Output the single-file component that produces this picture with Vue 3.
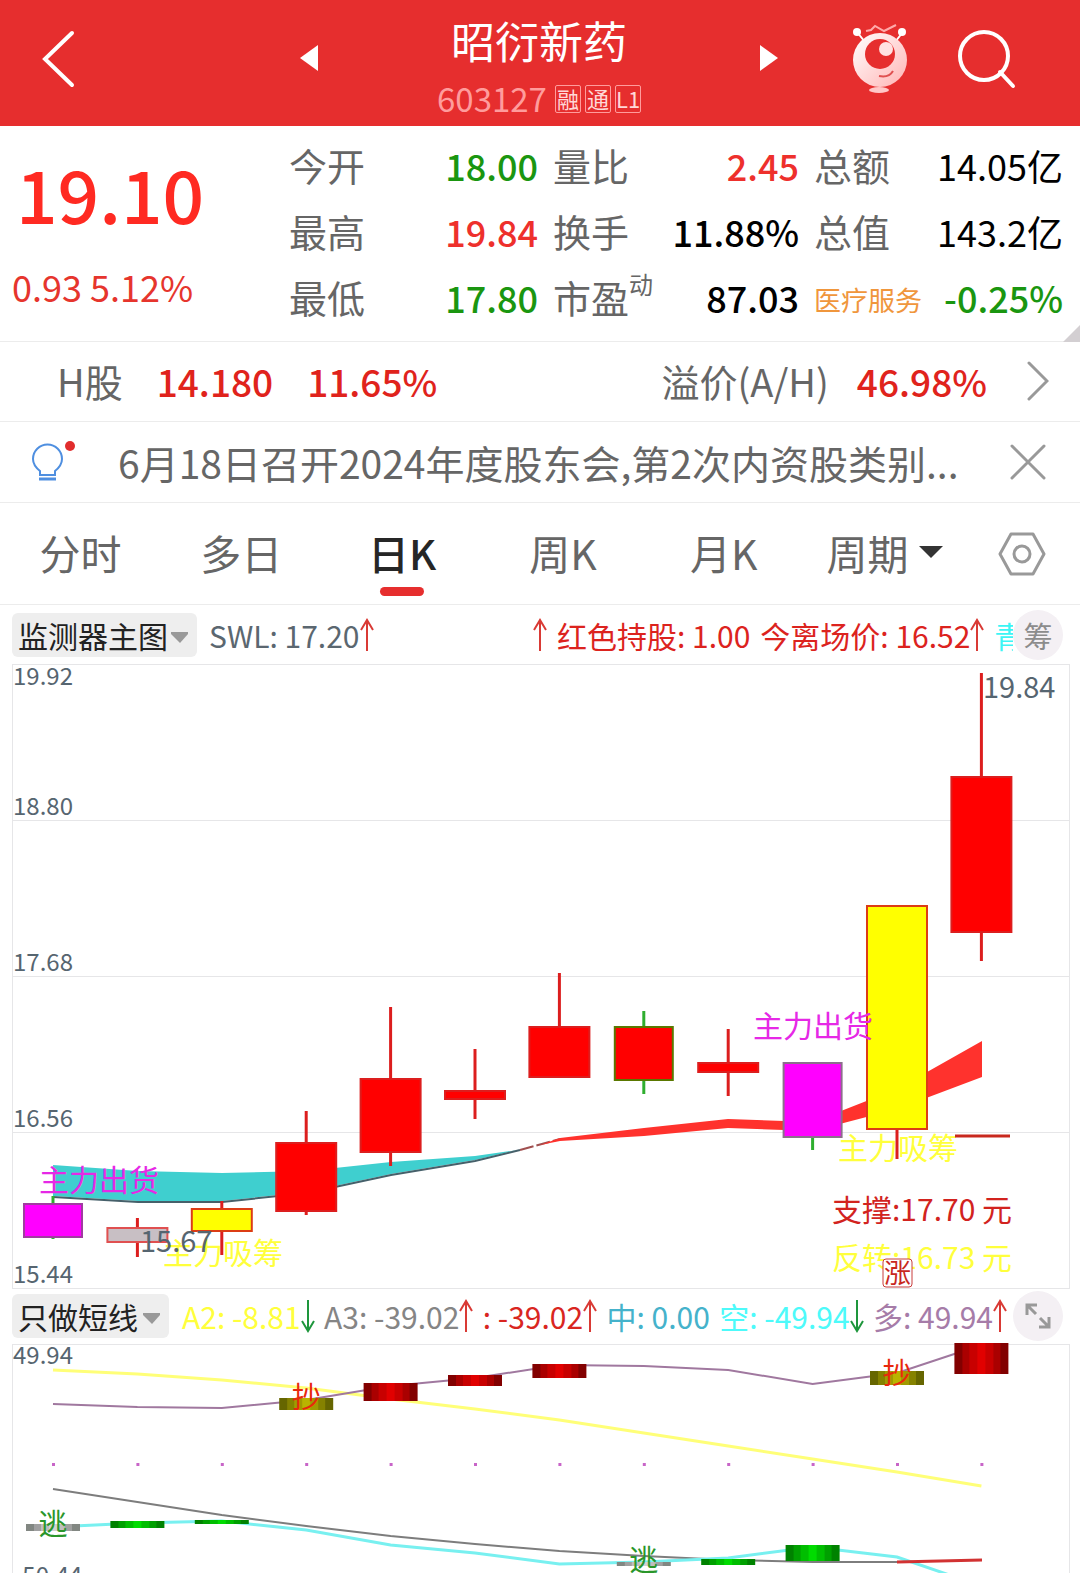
<script setup>
import { ref } from 'vue'

const quoteRows = [
  [
    { label: '今开', value: '18.00', tone: 'down' },
    { label: '量比', value: '2.45', tone: 'up' },
    { label: '总额', value: '14.05亿', tone: 'plain' },
  ],
  [
    { label: '最高', value: '19.84', tone: 'up' },
    { label: '换手', value: '11.88%', tone: 'ink' },
    { label: '总值', value: '143.2亿', tone: 'plain' },
  ],
  [
    { label: '最低', value: '17.80', tone: 'down' },
    { label: '市盈', sup: '动', value: '87.03', tone: 'ink' },
    { label: '医疗服务', sector: true, value: '-0.25%', tone: 'down' },
  ],
]

const tabs = ['分时', '多日', '日K', '周K', '月K', '周期']
const activeTab = ref('日K')
const mainIndicator = ref('监测器主图')
const subIndicator = ref('只做短线')

const subValues = [
  { text: 'A2: -8.81', color: '#ffff3c', dir: 'down' },
  { text: 'A3: -39.02', color: '#858585', dir: 'up' },
  { text: ': -39.02', color: '#d9261f', dir: 'up' },
  { text: '中: 0.00', color: '#45b2cb' },
  { text: '空: -49.94', color: '#4dfafa', dir: 'down' },
  { text: '多: 49.94', color: '#a67ca8', dir: 'up' },
]

const cx = (i) => 53 + i * 84.4

const axisLabels = [
  { text: '19.92', y: 21 },
  { text: '18.80', y: 151 },
  { text: '17.68', y: 307 },
  { text: '16.56', y: 463 },
  { text: '15.44', y: 619 },
]

const RED = '#dc1e1e'
const GREEN = '#2fae2f'
const candles = [
  { top: 540, bottom: 573, high: 532, low: 575, fill: '#ff00ff', edge: '#a03ca0', wick: GREEN, w: 58 },
  { top: 564, bottom: 578, high: 554, low: 593, fill: '#c8bfc4', edge: '#e05050', wick: RED, w: 60 },
  { top: 545, bottom: 567, high: 537, low: 591, fill: '#ffff00', edge: '#dc3c14', wick: RED, w: 60 },
  { top: 479, bottom: 547, high: 447, low: 551, fill: '#ff0000', edge: RED, wick: RED, w: 60 },
  { top: 415, bottom: 488, high: 343, low: 502, fill: '#ff0000', edge: RED, wick: RED, w: 60 },
  { top: 427, bottom: 435, high: 385, low: 455, fill: '#ff0000', edge: RED, wick: RED, w: 60 },
  { top: 363, bottom: 413, high: 309, low: 413, fill: '#ff0000', edge: RED, wick: RED, w: 60 },
  { top: 363, bottom: 416, high: 347, low: 430, fill: '#ff0000', edge: '#5a7800', wick: GREEN, w: 58 },
  { top: 399, bottom: 408, high: 365, low: 432, fill: '#ff0000', edge: RED, wick: RED, w: 60 },
  { top: 399, bottom: 473, high: 399, low: 486, fill: '#ff00ff', edge: '#8c6e8c', wick: GREEN, w: 58 },
  { top: 242, bottom: 465, high: 242, low: 495, fill: '#ffff00', edge: '#dc3c14', wick: RED, w: 60 },
  { top: 113, bottom: 268, high: 9, low: 297, fill: '#ff0000', edge: RED, wick: RED, w: 60 },
]

const palettes = {
  red: ['#820000', '#aa0000', '#c80000', '#e10000'],
  olive: ['#666600', '#858200', '#a09a00', '#b9b400'],
  green: ['#008200', '#00a000', '#00be00', '#00dc00'],
  gray: ['#828782', '#a0a0a0', '#bebebe', '#d2d2d2'],
}
const stripeWidths = [54, 38, 24, 8]
const bars = [
  { i: 0, y: 180, h: 7, kind: 'gray' },
  { i: 1, y: 177, h: 7, kind: 'green' },
  { i: 2, y: 176, h: 4, kind: 'green' },
  { i: 3, y: 54, h: 12, kind: 'olive' },
  { i: 4, y: 39, h: 18, kind: 'red' },
  { i: 5, y: 31, h: 11, kind: 'red' },
  { i: 6, y: 20, h: 14, kind: 'red' },
  { i: 7, y: 218, h: 4, kind: 'gray' },
  { i: 8, y: 215, h: 6, kind: 'green' },
  { i: 9, y: 201, h: 16, kind: 'green' },
  { i: 10, y: 27, h: 14, kind: 'olive' },
  { i: 11, y: -1, h: 31, kind: 'red' },
]

const line = (ys) => ys.map((y, i) => `${cx(i)},${y}`).join(' ')
const shortLine = line([26, 30, 36, 44, 55, 65, 76, 89, 102, 115, 128, 142])
const bullLine = line([60, 63, 64, 56, 42, 34, 21, 22, 26, 40, 29, 1])
const midLine = line([145, 158, 171, 182, 192, 200, 207, 212, 216, 218, 218])
const bearLine = line([183, 179, 177, 186, 201, 209, 220, 218, 214, 203, 213, 242])
</script>

<template>
  <div class="page">
    <header class="topbar">
      <button class="icon-btn back" aria-label="返回">
        <svg width="36" height="60" viewBox="0 0 36 60"><path d="M31 4 L4 30 L31 56" fill="none" stroke="#fff" stroke-width="4" stroke-linecap="round" /></svg>
      </button>
      <div class="switcher">
        <button class="icon-btn" aria-label="上一只">
          <svg width="18" height="28" viewBox="0 0 18 28"><path d="M18 1 V27 L0 14 Z" fill="#fff" /></svg>
        </button>
        <div class="stock">
          <h1>昭衍新药</h1>
          <p class="code"><span>603127</span><b>融</b><b>通</b><b>L1</b></p>
        </div>
        <button class="icon-btn" aria-label="下一只">
          <svg width="18" height="28" viewBox="0 0 18 28"><path d="M0 1 V27 L18 14 Z" fill="#fff" /></svg>
        </button>
      </div>
      <div class="actions">
        <button class="icon-btn" aria-label="智能助手">
          <svg width="60" height="70" viewBox="0 0 60 70">
            <defs>
              <linearGradient id="bot" x1="0" y1="0" x2="1" y2="1">
                <stop offset="0" stop-color="#fff" />
                <stop offset="1" stop-color="#ffb4b4" />
              </linearGradient>
            </defs>
            <path d="M7 8 L15 18 M53 8 L45 18" stroke="#fff" stroke-width="2" />
            <path d="M16 7 L21 6 L25 2 L34 7 L46 1" fill="none" stroke="#ffaaaa" stroke-width="2" />
            <circle cx="7" cy="8" r="4" fill="#fff" />
            <circle cx="52" cy="8" r="4" fill="#fff" />
            <circle cx="30" cy="36" r="27" fill="url(#bot)" />
            <circle cx="30" cy="30" r="15" fill="#e62e2e" />
            <circle cx="36" cy="25" r="7" fill="#ffe1e1" />
            <path d="M29 52 Q39 54 43 47" fill="none" stroke="#e05050" stroke-width="2" />
            <ellipse cx="29" cy="66" rx="10" ry="3" fill="#ffc8c8" />
          </svg>
        </button>
        <button class="icon-btn" aria-label="搜索">
          <svg width="60" height="60" viewBox="0 0 60 60"><g fill="none" stroke="#fff" stroke-width="4" stroke-linecap="round"><circle cx="28" cy="27" r="24" /><path d="M44 43 L57 57" /></g></svg>
        </button>
      </div>
    </header>

    <section class="quote">
      <div class="price">
        <strong>19.10</strong>
        <p>0.93 5.12%</p>
      </div>
      <div class="stats">
        <template v-for="(row, r) in quoteRows" :key="r">
          <dl v-for="cell in row" :key="cell.label">
            <dt :class="{ sector: cell.sector }">{{ cell.label }}<sup v-if="cell.sup">{{ cell.sup }}</sup></dt>
            <dd :class="cell.tone">{{ cell.value }}</dd>
          </dl>
        </template>
      </div>
      <span class="fold"></span>
    </section>

    <a class="hshare" href="#h">
      <span class="name">H股</span>
      <span class="num">14.180</span>
      <span class="num">11.65%</span>
      <span class="name premium">溢价(A/H)</span>
      <span class="num">46.98%</span>
      <svg width="22" height="40" viewBox="0 0 22 40"><path d="M2 2 L20 20 L2 38" fill="none" stroke="#999" stroke-width="3" stroke-linecap="round" /></svg>
    </a>

    <section class="notice">
      <svg width="46" height="44" viewBox="0 0 46 44">
        <g fill="none" stroke="#4f8fe0" stroke-width="2">
          <path d="M9 35 V31 C4 27 2 23 2 19 A14.500 14.500 0 0 1 31 19 C31 23 29 27 24 31 V35 Z" />
          <path d="M8 39 H25" stroke-width="3" />
        </g>
        <circle cx="39" cy="6" r="5" fill="#e12d2d" />
      </svg>
      <a href="#notice">6月18日召开2024年度股东会,第2次内资股类别...</a>
      <button class="icon-btn" aria-label="关闭">
        <svg width="36" height="36" viewBox="0 0 36 36"><path d="M2 2 L34 34 M34 2 L2 34" stroke="#999" stroke-width="3" stroke-linecap="round" /></svg>
      </button>
    </section>

    <nav class="tabs">
      <button v-for="t in tabs" :key="t" class="tab" :class="{ active: t === activeTab }" @click="activeTab = t">
        <span>{{ t }}</span>
        <svg v-if="t === '周期'" width="24" height="12" viewBox="0 0 24 12"><path d="M0 0 H24 L12 12 Z" fill="#333" /></svg>
      </button>
      <button class="icon-btn" aria-label="设置">
        <svg width="48" height="44" viewBox="0 0 48 44"><g fill="none" stroke="#999" stroke-width="3" stroke-linejoin="round"><path d="M13 2 H35 L46 22 L35 42 H13 L2 22 Z" /><circle cx="24" cy="22" r="8" /></g></svg>
      </button>
    </nav>

    <div class="indicator first">
      <label class="picker">
        <select v-model="mainIndicator" class="five" aria-label="主图指标"><option>监测器主图</option></select>
        <svg width="17" height="11" viewBox="0 0 17 11"><path d="M0 0 H17 V2 L9 11 L0 2 Z" fill="#999" /></svg>
      </label>
      <span class="item slate">SWL: 17.20<svg class="arrow" viewBox="0 0 14 34"><path d="M7 33 V2 M1 12 L7 2 L13 12" /></svg></span>
      <div class="right">
        <span class="item red"><svg class="arrow" viewBox="0 0 14 34"><path d="M7 33 V2 M1 12 L7 2 L13 12" /></svg></span>
        <span class="item red">红色持股: 1.00</span>
        <span class="item red">今离场价: 16.52<svg class="arrow" viewBox="0 0 14 34"><path d="M7 33 V2 M1 12 L7 2 L13 12" /></svg></span>
        <span class="item cut">青</span>
      </div>
      <button class="round">筹</button>
    </div>

    <svg class="chart" viewBox="0 0 1080 624">
      <g fill="none" stroke="#e6e6e8" stroke-width="1" shape-rendering="crispEdges">
        <rect x="12" y="0" width="1057" height="624" />
        <path d="M12 156 H1069 M12 312 H1069 M12 468 H1069" />
      </g>
      <g class="axis">
        <text v-for="l in axisLabels" :key="l.text" x="13" :y="l.y">{{ l.text }}</text>
      </g>
      <path d="M53 501 L138 507 L222 509 L307 507 L391 498 L475 492 L518 486 L475 496 L391 510 L307 528 L222 537 L138 537 L53 532 Z" fill="#3fcfcf" />
      <path d="M53 533 L138 538 L222 538 L307 529 L391 511 L475 497 L520 486" fill="none" stroke="#46606a" stroke-width="2" />
      <path d="M520 486 L560 475" stroke="#a05050" stroke-width="2" stroke-dasharray="14 3" />
      <path d="M540 481 L560 474 L644 464 L728 455 L813 458 L897 425 L982 377 V413 L897 445 L813 467 L728 464 L644 472 L560 477 Z" fill="#ff322d" />
      <g class="tag yellow">
        <text x="163" y="600">主力吸筹</text>
        <text x="838" y="495">主力吸筹</text>
      </g>
      <g v-for="(c, i) in candles" :key="i">
        <path :d="`M${cx(i)} ${c.high} V${c.low}`" :stroke="c.wick" stroke-width="3" />
        <rect :x="cx(i) - c.w / 2" :y="c.top" :width="c.w" :height="c.bottom - c.top" :fill="c.fill" :stroke="c.edge" stroke-width="2" />
      </g>
      <path d="M955 472 H1010" stroke="#c8281e" stroke-width="3" />
      <g class="tag magenta">
        <text x="39" y="527">主力出货</text>
        <text x="753" y="373">主力出货</text>
      </g>
      <text class="mark" x="140" y="588">15.67</text>
      <text class="mark" x="983" y="34">19.84</text>
      <text class="tag crimson" x="832" y="557">支撑:17.70 元</text>
      <text class="tag yellow" x="832" y="605">反转:16.73 元</text>
      <rect x="883" y="595" width="29" height="28" rx="3" fill="#fff" stroke="#c83c3c" />
      <text class="badge" x="884" y="619">涨</text>
    </svg>

    <div class="indicator">
      <label class="picker">
        <select v-model="subIndicator" class="four" aria-label="副图指标"><option>只做短线</option></select>
        <svg width="17" height="11" viewBox="0 0 17 11"><path d="M0 0 H17 V2 L9 11 L0 2 Z" fill="#999" /></svg>
      </label>
      <div class="values">
        <span v-for="v in subValues" :key="v.text" class="item" :style="{ color: v.color }">{{ v.text }}<svg v-if="v.dir" class="arrow" :class="v.dir" viewBox="0 0 14 34"><path d="M7 33 V2 M1 12 L7 2 L13 12" /></svg></span>
      </div>
      <button class="round" aria-label="全屏">
        <svg width="26" height="26" viewBox="0 0 26 26"><path d="M11 11 L2 2 M2 12 V2 H12 M15 15 L24 24 M24 14 V24 H14" fill="none" stroke="#999" stroke-width="3" /></svg>
      </button>
    </div>

    <svg class="chart" viewBox="0 0 1080 243">
      <rect x="12" y="0" width="1057" height="242" fill="none" stroke="#e6e6e8" stroke-width="1" shape-rendering="crispEdges" />
      <g class="axis">
        <text x="13" y="20">49.94</text>
        <text x="14" y="240">-50.44</text>
      </g>
      <g fill="none" stroke-width="2">
        <polyline :points="shortLine" stroke="#ffff78" stroke-width="3" />
        <polyline :points="bullLine" stroke="#a0789f" />
        <polyline :points="midLine" stroke="#7d7d7d" />
        <polyline :points="bearLine" stroke="#78f0f0" stroke-width="3" />
        <path d="M897 218 L982 216" stroke="#d23232" stroke-width="3" />
      </g>
      <rect v-for="n in 12" :key="n" :x="cx(n - 1) - 1" y="119" width="3" height="3" fill="#c864c8" />
      <g v-for="b in bars" :key="b.i">
        <rect v-for="(w, s) in stripeWidths" :key="s" :x="cx(b.i) - w / 2" :y="b.y" :width="w" :height="b.h" :fill="palettes[b.kind][s]" />
      </g>
      <g class="signal buy">
        <text :x="cx(3)" y="64">抄</text>
        <text :x="cx(10)" y="40">抄</text>
      </g>
      <g class="signal sell">
        <text :x="cx(0)" y="191">逃</text>
        <text :x="cx(7)" y="227">逃</text>
      </g>
    </svg>
  </div>
</template>

<style>
body {
  background: #fff;
}
</style>

<style scoped>
.page {
  height: 100vh;
  overflow: hidden;
  display: flex;
  flex-direction: column;
  background: #fff;
  color: #666;
  font-family: "Noto Sans CJK SC", "Noto Sans", sans-serif;
}
.page > * {
  flex-shrink: 0;
}
.page * {
  box-sizing: border-box;
}
h1, p, dl, dd {
  margin: 0;
}
svg {
  display: block;
}
button, select {
  border: 0;
  padding: 0;
  background: none;
  color: inherit;
  font: inherit;
}
a {
  color: inherit;
  text-decoration: none;
}
.icon-btn {
  display: flex;
  align-items: center;
  justify-content: center;
}

.topbar {
  height: 126px;
  display: grid;
  grid-template-columns: 300px 1fr 302px;
  background: #e62e2e;
  color: #fff;
}
.back {
  width: 118px;
  padding-bottom: 8px;
}
.switcher {
  display: flex;
  justify-content: space-between;
}
.switcher .icon-btn {
  padding-bottom: 10px;
}
.stock {
  text-align: center;
}
.stock h1 {
  padding-top: 12px;
  font-size: 44px;
  line-height: 56px;
  font-weight: 400;
}
.code {
  display: flex;
  gap: 4px;
  align-items: center;
  justify-content: center;
  margin-top: 10px;
  font-size: 33px;
  line-height: 40px;
  color: #ff9c9c;
}
.code span {
  margin-right: 4px;
  padding-bottom: 2px;
}
.code b {
  width: 26px;
  height: 28px;
  border: 1px solid #ff9c9c;
  border-radius: 2px;
  font-size: 22px;
  line-height: 25px;
  font-weight: 400;
  color: #ffd8d8;
}
.actions {
  display: flex;
  align-items: center;
  gap: 46px;
  padding-left: 72px;
  padding-bottom: 8px;
}

.quote {
  position: relative;
  display: grid;
  grid-template-columns: 289px 1fr;
  height: 216px;
  padding: 8px 17px 0 0;
  border-bottom: 1px solid #ececec;
}
.price strong {
  display: block;
  padding: 8px 0 0 16px;
  font-size: 73px;
  line-height: 100px;
  font-weight: 500;
  color: #ff2a22;
}
.price p {
  padding: 21px 0 0 12px;
  font-size: 36px;
  line-height: 46px;
  color: #e6352d;
}
.stats {
  display: grid;
  grid-template-columns: 249px 246px 1fr;
  grid-auto-rows: 66px;
  column-gap: 15px;
}
.stats dl {
  display: flex;
  align-items: center;
  justify-content: space-between;
  padding-bottom: 4px;
  font-size: 38px;
}
.stats dt {
  display: flex;
  align-items: center;
  line-height: 50px;
  white-space: nowrap;
}
.stats dt sup {
  align-self: flex-start;
  font-size: 24px;
  line-height: 24px;
}
.stats dt.sector {
  padding-top: 6px;
  font-size: 27px;
  color: #f0963c;
}
.stats dd {
  font-size: 36px;
  font-weight: 500;
}
.stats dd.up {
  color: #ee302c;
}
.stats dd.down {
  color: #1a9610;
}
.stats dd.ink {
  color: #000;
}
.stats dd.plain {
  color: #000;
  font-weight: 400;
}
.fold {
  position: absolute;
  right: 0;
  bottom: -1px;
  border-left: 17px solid transparent;
  border-bottom: 17px solid #d3cfd2;
}

.hshare {
  height: 80px;
  display: flex;
  align-items: center;
  padding: 0 31px 2px 57px;
  border-bottom: 1px solid #ececec;
}
.hshare .name {
  font-size: 38px;
}
.hshare .num {
  margin-left: 34px;
  font-size: 37px;
  font-weight: 500;
  color: #e0231c;
}
.hshare .premium {
  margin-left: auto;
}
.hshare .premium + .num {
  margin-left: 28px;
}
.hshare svg {
  margin-left: 40px;
}

.notice {
  height: 81px;
  display: flex;
  align-items: center;
  padding: 0 34px 0 31px;
  border-bottom: 1px solid #ececec;
}
.notice a {
  flex: 1;
  margin: 0 40px 0 41px;
  font-size: 39px;
  white-space: nowrap;
}

.tabs {
  height: 102px;
  display: grid;
  grid-template-columns: repeat(6, 1fr) 115px;
  border-bottom: 1px solid #ececec;
}
.tab {
  position: relative;
  display: flex;
  align-items: center;
  justify-content: center;
  gap: 10px;
  padding-bottom: 4px;
  font-size: 41px;
}
.tab.active {
  color: #262626;
  font-weight: 500;
}
.tab.active::after {
  content: "";
  position: absolute;
  bottom: 8px;
  width: 44px;
  height: 9px;
  border-radius: 5px;
  background: #e62e2e;
}

.indicator {
  height: 56px;
  display: flex;
  align-items: center;
  padding: 0 17px 0 12px;
}
.indicator.first {
  height: 59px;
}
.picker {
  position: relative;
  display: flex;
  align-items: center;
}
.picker select {
  appearance: none;
  height: 44px;
  padding: 0 0 4px 6px;
  border-radius: 6px;
  background: #eee;
  color: #222;
  font-size: 30px;
}
.picker .five {
  width: 185px;
}
.picker .four {
  width: 157px;
}
.picker svg {
  position: absolute;
  right: 9px;
  top: 19px;
  pointer-events: none;
}
.item {
  display: inline-flex;
  align-items: center;
  flex-shrink: 0;
  font-size: 30px;
  line-height: 44px;
  white-space: pre;
}
.slate {
  margin-left: 12px;
  color: #5b6770;
}
.red {
  color: #dc231e;
}
.cut {
  color: #3cf5f5;
}
.right {
  display: flex;
  gap: 10px;
  width: 480px;
  margin-left: auto;
  overflow: hidden;
}
.values {
  flex: 1;
  display: flex;
  justify-content: space-between;
  padding: 0 6px 0 13px;
}
.arrow {
  width: 14px;
  height: 34px;
  fill: none;
  stroke: #d93a35;
  stroke-width: 2;
}
.arrow.down {
  stroke: #1e963c;
  transform: rotate(180deg);
}
.round {
  display: flex;
  flex-shrink: 0;
  align-items: center;
  justify-content: center;
  width: 50px;
  height: 50px;
  border-radius: 50%;
  background: #f4f0f4;
  color: #8c8c8c;
  font-size: 29px;
}

.chart {
  width: 100%;
  height: auto;
  overflow: visible;
}
.axis {
  font-size: 24px;
  fill: #566570;
}
.mark {
  font-size: 29px;
  fill: #566570;
}
.tag {
  font-size: 30px;
}
.tag.yellow {
  fill: #ffff3c;
}
.tag.magenta {
  fill: #e628e6;
}
.tag.crimson {
  fill: #d2231e;
}
.badge {
  font-size: 27px;
  fill: #c8281e;
}
.signal {
  font-size: 29px;
  text-anchor: middle;
}
.signal.buy {
  fill: #e8280c;
}
.signal.sell {
  fill: #2a962a;
}
</style>
